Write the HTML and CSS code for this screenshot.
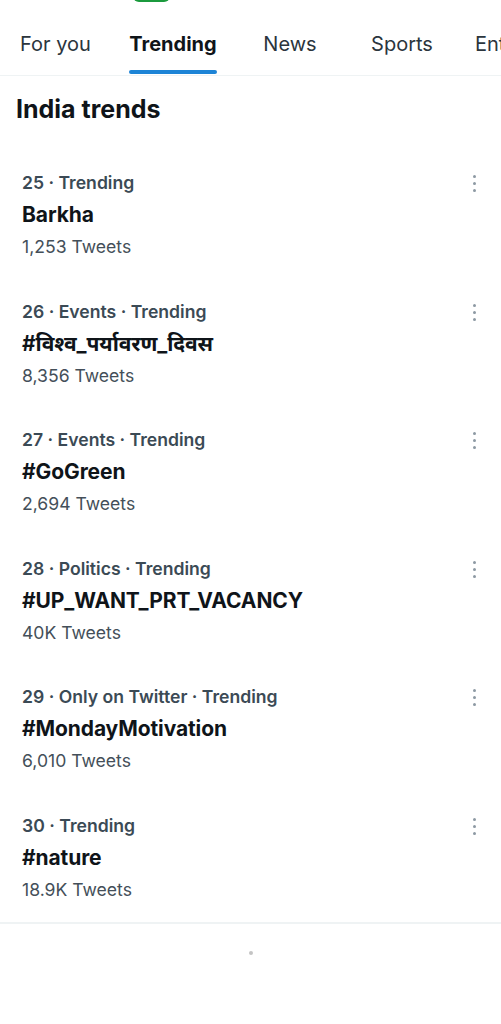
FILE: index.html
```html
<!DOCTYPE html>
<html>
<head>
<meta charset="utf-8">
<link rel="stylesheet" href="styles.css">
</head>
<body>
<div class="page">
  <div class="pill"></div>
  <nav class="tabs">
    <div class="tab"><span class="label">For you</span></div>
    <div class="tab active"><span class="label">Trending</span></div>
    <div class="tab"><span class="label">News</span></div>
    <div class="tab"><span class="label">Sports</span></div>
    <div class="tab"><span class="label">Entertainment</span></div>
  </nav>
  <h1 class="heading">India trends</h1>
  <div class="list">
    <div class="item">
      <div class="meta">25 · Trending</div>
      <div class="title">Barkha</div>
      <div class="count">1,253 Tweets</div>
      <div class="more"><i></i><i></i><i></i></div>
    </div>
    <div class="item">
      <div class="meta">26 · Events · Trending</div>
      <div class="title">#विश्व_पर्यावरण_दिवस</div>
      <div class="count">8,356 Tweets</div>
      <div class="more"><i></i><i></i><i></i></div>
    </div>
    <div class="item">
      <div class="meta">27 · Events · Trending</div>
      <div class="title">#GoGreen</div>
      <div class="count">2,694 Tweets</div>
      <div class="more"><i></i><i></i><i></i></div>
    </div>
    <div class="item">
      <div class="meta">28 · Politics · Trending</div>
      <div class="title">#UP_WANT_PRT_VACANCY</div>
      <div class="count">40K Tweets</div>
      <div class="more"><i></i><i></i><i></i></div>
    </div>
    <div class="item">
      <div class="meta">29 · Only on Twitter · Trending</div>
      <div class="title">#MondayMotivation</div>
      <div class="count">6,010 Tweets</div>
      <div class="more"><i></i><i></i><i></i></div>
    </div>
    <div class="item">
      <div class="meta">30 · Trending</div>
      <div class="title">#nature</div>
      <div class="count">18.9K Tweets</div>
      <div class="more"><i></i><i></i><i></i></div>
    </div>
  </div>
  <div class="loader"><span class="dot"></span></div>
</div>
</body>
</html>
```

FILE: styles.css
```css
* { box-sizing: border-box; }
html, body { margin: 0; padding: 0; background: #fff; }
body {
  font-family: Inter, "Noto Sans", "Noto Sans Devanagari", sans-serif;
  color: #0f1419;
  width: 501px;
  overflow: hidden;
}
.page { position: relative; width: 501px; height: 1024px; overflow: hidden; }
.pill {
  position: absolute;
  left: 133px; top: -10px;
  width: 37px; height: 12px;
  border-radius: 6px;
  background: #1b9a3d;
}
.tabs {
  display: grid;
  grid-template-columns: 111px 124px 110px 114px 42px;
  height: 76px;
  border-bottom: 1px solid #eff3f4;
  white-space: nowrap;
  overflow: hidden;
}
.tab {
  display: flex;
  justify-content: center;
  align-items: stretch;
  font-size: 20px;
  font-weight: 400;
  color: #2b353d;
  overflow: visible;
}
.tab:last-child { justify-content: flex-start; padding-left: 16px; }
.label {
  position: relative;
  display: flex;
  align-items: center;
  padding-top: 12px;
}
.tab.active { color: #0f1419; font-weight: 700; }
.tab.active .label::after {
  content: "";
  position: absolute;
  left: 0; right: 0; bottom: 1px;
  height: 4px;
  border-radius: 2px;
  background: #1d84d6;
}
.heading {
  margin: 0;
  padding: 15px 16px 0;
  height: 74px;
  font-size: 25px;
  line-height: 36px;
  font-weight: 700;
  color: #0f1419;
}
.list { border-bottom: 2px solid #eff3f4; }
.item {
  position: relative;
  padding: 17px 22px 16px;
  height: 128.6px;
}
.meta {
  font-size: 17.6px;
  line-height: 32px;
  font-weight: 600;
  color: #3b4a55;
}
.title {
  font-size: 21px;
  line-height: 32px;
  font-weight: 700;
  color: #0f1419;
  letter-spacing: -0.1px;
}
.count {
  font-size: 17.6px;
  line-height: 31px;
  color: #444f59;
}
.more {
  position: absolute;
  right: 25px; top: 25px;
  display: flex;
  flex-direction: column;
  gap: 4px;
}
.more i {
  display: block;
  width: 3px; height: 3px;
  border-radius: 50%;
  background: #8d99a3;
}
.loader { display: flex; justify-content: center; padding-top: 27px; }
.dot { width: 4px; height: 4px; border-radius: 50%; background: #c4c4c4; }
```
